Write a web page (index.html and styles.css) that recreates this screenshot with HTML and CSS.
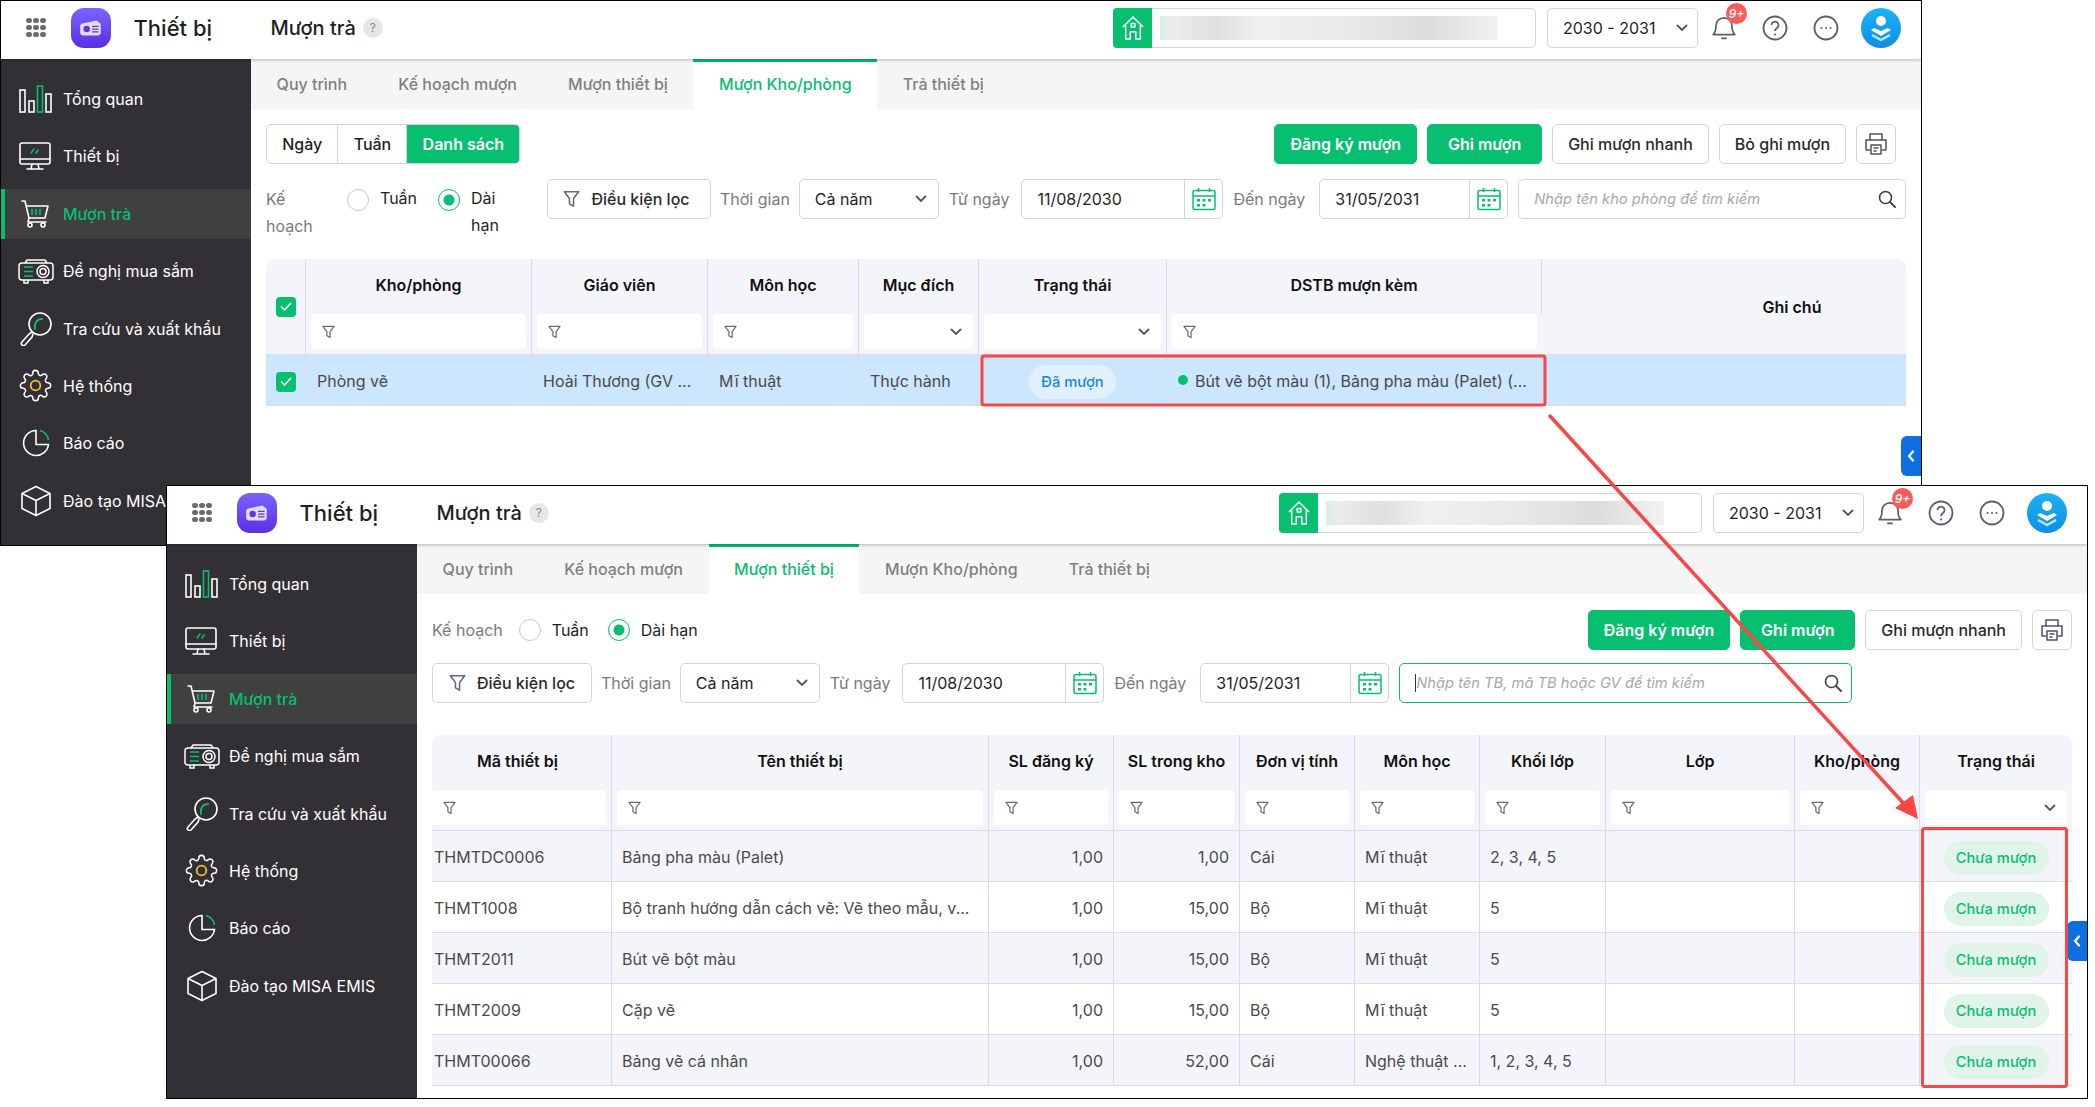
FILE: index.html
```html
<!DOCTYPE html>
<html lang="en">

<head>
    <meta charset="UTF-8">
    <meta name="viewport" content="width=device-width, initial-scale=1.0">
    <title>Mượn trà</title>
    <link rel="stylesheet" href="styles.css">
</head>

<body>
    <!-- Shared icons -->
    <svg class="sprite" xmlns="http://www.w3.org/2000/svg">
        <symbol id="i-bars" viewBox="0 0 33 28">
            <g fill="none" stroke="#fff" stroke-width="1.6"><rect x="1" y="5" width="5" height="22"/><rect x="10" y="16" width="5" height="11"/><rect x="27" y="9" width="5" height="18"/></g>
            <rect x="18.5" y="1" width="5" height="26" fill="none" stroke="#06bf6f" stroke-width="1.6"/>
        </symbol>
        <symbol id="i-monitor" viewBox="0 0 32 28">
            <g fill="none" stroke="#fff" stroke-width="1.6" stroke-linecap="round"><rect x="1" y="1" width="30" height="21" rx="2"/><path d="M1 17h30M13 22l-1 5M19 22l1 5M8 27h16"/></g>
            <path d="M12 11l3-4M17 11l2-3" stroke="#06bf6f" stroke-width="1.6" stroke-linecap="round"/>
        </symbol>
        <symbol id="i-cart" viewBox="0 0 28 28">
            <g fill="none" stroke="#fff" stroke-width="1.6" stroke-linecap="round" stroke-linejoin="round"><path d="M1 1h3l4 17h16M5 6h22l-3 12M8 18l-1 4h18"/><circle cx="9" cy="25" r="2"/><circle cx="22" cy="25" r="2"/></g>
            <path d="M11 9v6M15 9v6M19 9v6" stroke="#06bf6f" stroke-width="1.6"/>
        </symbol>
        <symbol id="i-projector" viewBox="0 0 36 26">
            <g fill="none" stroke="#fff" stroke-width="1.5"><rect x="1" y="5" width="34" height="17" rx="3"/><path d="M7 5l2-3h18l2 3M6 22v3h4v-3M26 22v3h4v-3"/><circle cx="25" cy="13.500" r="6"/><circle cx="25" cy="13.500" r="3"/></g>
            <path d="M6 9h9M6 13.500h9M6 18h9" stroke="#06bf6f" stroke-width="1.6"/>
        </symbol>
        <symbol id="i-search" viewBox="0 0 32 34">
            <g fill="none" stroke="#fff" stroke-width="1.6" stroke-linecap="round"><circle cx="20" cy="12" r="11"/><path d="M12 20l-3 2-7 8a2 2 0 0 0 3 3l7-8 1-3"/></g>
            <path d="M15 17c-1-6 2-10 7-10" fill="none" stroke="#06bf6f" stroke-width="1.8" stroke-linecap="round"/>
        </symbol>
        <symbol id="i-gear" viewBox="0 0 24 24">
            <path d="M19.400 15a1.650 1.650 0 0 0 .33 1.820l.06.06a2 2 0 0 1 0 2.830 2 2 0 0 1-2.830 0l-.06-.06a1.650 1.650 0 0 0-1.820-.33 1.650 1.650 0 0 0-1 1.510V21a2 2 0 0 1-2 2 2 2 0 0 1-2-2v-.09A1.650 1.650 0 0 0 9 19.400a1.650 1.650 0 0 0-1.820.33l-.06.06a2 2 0 0 1-2.830 0 2 2 0 0 1 0-2.830l.06-.06a1.650 1.650 0 0 0 .33-1.820 1.650 1.650 0 0 0-1.510-1H3a2 2 0 0 1-2-2 2 2 0 0 1 2-2h.09A1.650 1.650 0 0 0 4.600 9a1.650 1.650 0 0 0-.33-1.820l-.06-.06a2 2 0 0 1 0-2.830 2 2 0 0 1 2.830 0l.06.06a1.650 1.650 0 0 0 1.820.33H9a1.650 1.650 0 0 0 1-1.510V3a2 2 0 0 1 2-2 2 2 0 0 1 2 2v.09a1.650 1.650 0 0 0 1 1.510 1.650 1.650 0 0 0 1.820-.33l.06-.06a2 2 0 0 1 2.830 0 2 2 0 0 1 0 2.830l-.06.06a1.650 1.650 0 0 0-.33 1.820V9a1.650 1.650 0 0 0 1.510 1H21a2 2 0 0 1 2 2 2 2 0 0 1-2 2h-.09a1.650 1.650 0 0 0-1.510 1z" fill="none" stroke="#fff" stroke-width="1.100"/>
            <circle cx="12" cy="12" r="3.500" fill="none" stroke="#f2c230" stroke-width="1.300"/>
        </symbol>
        <symbol id="i-pie" viewBox="0 0 28 28">
            <path d="M14 1.500a12.500 12.500 0 1 0 12.500 14H14z" fill="none" stroke="#fff" stroke-width="1.600"/>
            <path d="M18 1.600a12 12 0 0 1 8.500 9.400" fill="none" stroke="#06bf6f" stroke-width="1.600"/>
        </symbol>
        <symbol id="i-cube" viewBox="0 0 32 32">
            <path d="M16 1.500L30 8.500v15L16 30.500 2 23.500v-15zM2 8.500l14 7 14-7M16 15.500v15" fill="none" stroke="#fff" stroke-width="1.600" stroke-linejoin="round"/>
        </symbol>
        <symbol id="i-funnel" viewBox="0 0 14 15">
            <path d="M1 1.500h12L8.700 7v6.500L5.300 11.500V7z" fill="none" stroke="#666a75" stroke-width="1.300" stroke-linejoin="round"/>
        </symbol>
        <symbol id="i-chevron" viewBox="0 0 12 8">
            <path d="M1.500 1.500L6 6l4.500-4.500" fill="none" stroke="#4f5260" stroke-width="1.800" stroke-linecap="round"/>
        </symbol>
        <symbol id="i-calendar" viewBox="0 0 24 24">
            <g fill="none" stroke="#06bf6f" stroke-width="1.500"><rect x="1" y="3.500" width="22" height="19" rx="2"/><path d="M1 9h22M6.500 1v4M17.500 1v4"/></g>
            <path d="M5 12h3v2.500H5zM10.500 12h3v2.500h-3zM16 12h3v2.500h-3zM5 17h3v2.500H5zM10.500 17h3v2.500h-3z" fill="#06bf6f"/>
        </symbol>
        <symbol id="i-lens" viewBox="0 0 18 18">
            <circle cx="7.500" cy="7.500" r="6" fill="none" stroke="#3c3f4a" stroke-width="1.600"/>
            <path d="M12 12l5 5" stroke="#3c3f4a" stroke-width="1.800" stroke-linecap="round"/>
        </symbol>
        <symbol id="i-printer" viewBox="0 0 24 24">
            <g fill="none" stroke="#4f5260" stroke-width="1.500" stroke-linejoin="round"><path d="M6 8V2h12v6M6 18H2V8h20v10h-4"/><rect x="7" y="13" width="10" height="9"/><path d="M9.500 16h5M9.500 19h3"/></g>
        </symbol>
        <symbol id="i-home" viewBox="0 0 24 28">
            <path d="M1 13L12 2l11 11M4 11v15h5v-8h6v8h5V11M10 9h4v4h-4z" fill="none" stroke="#fff" stroke-width="1.600" stroke-linejoin="round"/>
        </symbol>
        <symbol id="i-bell" viewBox="0 0 24 26">
            <path d="M2 20c2-2 2.500-4 2.500-8a7.500 7.500 0 0 1 15 0c0 4 .5 6 2.500 8zM10 23.500h4" fill="none" stroke="#5c5f6a" stroke-width="1.600" stroke-linecap="round" stroke-linejoin="round"/>
        </symbol>
        <symbol id="i-help" viewBox="0 0 26 26">
            <circle cx="13" cy="13" r="11.500" fill="none" stroke="#5c5f6a" stroke-width="1.800"/>
            <path d="M9.500 10a3.500 3.500 0 1 1 5.500 3c-1.300.9-2 1.500-2 3" fill="none" stroke="#5c5f6a" stroke-width="1.800"/>
            <circle cx="13" cy="19.500" r="1.100" fill="#5c5f6a"/>
        </symbol>
        <symbol id="i-more" viewBox="0 0 26 26">
            <circle cx="13" cy="13" r="11.500" fill="none" stroke="#5c5f6a" stroke-width="1.800"/>
            <path d="M8.500 13h.01M13 13h.01M17.500 13h.01" stroke="#5c5f6a" stroke-width="2" stroke-linecap="round"/>
        </symbol>
        <symbol id="i-user" viewBox="0 0 40 40">
            <circle cx="20" cy="13" r="5" fill="#fff"/>
            <path d="M10 22l10 6 10-6-3-2-7 3-7-3z" fill="#fff"/>
            <path d="M11 27l9 5 9-5" fill="none" stroke="#b8e6fd" stroke-width="2.500" stroke-linejoin="round"/>
        </symbol>
        <symbol id="i-beam" viewBox="0 0 24 16">
            <path d="M3 4l14-3 4 3v8c0 2-1 3-3 3H5c-2 0-3-1-3-3V6z" fill="#e3dcff"/>
            <circle cx="8" cy="9" r="3" fill="#5a35e0"/>
            <path d="M13 6.500h6M13 9h6M13 11.500h6" stroke="#5a35e0" stroke-width="1.200"/>
        </symbol>
        <symbol id="i-check" viewBox="0 0 12 10">
            <path d="M1.500 5l3 3 6-6.500" fill="none" stroke="#fff" stroke-width="1.700" stroke-linecap="round" stroke-linejoin="round"/>
        </symbol>
    </svg>

    <!-- Back window: Muon Kho/phong -->
    <div class="win win-a">
        <header class="head">
            <div class="apps"><i></i><i></i><i></i><i></i><i></i><i></i><i></i><i></i><i></i></div>
            <div class="logo"><svg><use href="#i-beam"/></svg></div>
            <div class="app-name">Thiết bị</div>
            <div class="page-name">Mượn trà</div>
            <div class="hint">?</div>
            <div class="school"><span class="school-home"><svg><use href="#i-home"/></svg></span><span class="school-blur"></span></div>
            <div class="year">2030 - 2031<svg class="chev"><use href="#i-chevron"/></svg></div>
            <div class="bell"><svg><use href="#i-bell"/></svg><span class="bell-count">9+</span></div>
            <svg class="head-icon"><use href="#i-help"/></svg>
            <svg class="head-icon"><use href="#i-more"/></svg>
            <div class="avatar"><svg><use href="#i-user"/></svg></div>
        </header>
        <div class="body">
            <nav class="side">
                <a class="nav-item"><svg class="nav-bars"><use href="#i-bars"/></svg>Tổng quan</a>
                <a class="nav-item"><svg class="nav-monitor"><use href="#i-monitor"/></svg>Thiết bị</a>
                <a class="nav-item active"><svg class="nav-cart"><use href="#i-cart"/></svg>Mượn trà</a>
                <a class="nav-item"><svg class="nav-projector"><use href="#i-projector"/></svg>Đề nghị mua sắm</a>
                <a class="nav-item"><svg class="nav-search"><use href="#i-search"/></svg>Tra cứu và xuất khẩu</a>
                <a class="nav-item"><svg class="nav-gear"><use href="#i-gear"/></svg>Hệ thống</a>
                <a class="nav-item"><svg class="nav-pie"><use href="#i-pie"/></svg>Báo cáo</a>
                <a class="nav-item"><svg class="nav-cube"><use href="#i-cube"/></svg>Đào tạo MISA EMIS</a>
            </nav>
            <main class="main">
                <div class="tabs">
                    <div class="tab">Quy trình</div>
                    <div class="tab">Kế hoạch mượn</div>
                    <div class="tab">Mượn thiết bị</div>
                    <div class="tab active">Mượn Kho/phòng</div>
                    <div class="tab">Trả thiết bị</div>
                </div>
                <div class="content">
                    <div class="bar">
                        <div class="views">
                            <div class="view">Ngày</div>
                            <div class="view">Tuần</div>
                            <div class="view active">Danh sách</div>
                        </div>
                        <div class="actions">
                            <button class="btn green">Đăng ký mượn</button>
                            <button class="btn green">Ghi mượn</button>
                            <button class="btn">Ghi mượn nhanh</button>
                            <button class="btn">Bỏ ghi mượn</button>
                            <button class="btn print"><svg><use href="#i-printer"/></svg></button>
                        </div>
                    </div>
                    <div class="filters narrow">
                        <div class="plan">
                            <div class="plan-label">Kế hoạch</div>
                            <div class="radio"><span class="dot"></span>Tuần</div>
                            <div class="radio on"><span class="dot"></span><span class="radio-text">Dài hạn</span></div>
                        </div>
                        <button class="btn filter"><svg><use href="#i-funnel"/></svg>Điều kiện lọc</button>
                        <span class="label">Thời gian</span>
                        <div class="select">Cả năm<svg class="chev"><use href="#i-chevron"/></svg></div>
                        <span class="label">Từ ngày</span>
                        <div class="date"><span>11/08/2030</span><i><svg><use href="#i-calendar"/></svg></i></div>
                        <span class="label">Đến ngày</span>
                        <div class="date date-end"><span>31/05/2031</span><i><svg><use href="#i-calendar"/></svg></i></div>
                        <div class="search"><span>Nhập tên kho phòng để tìm kiếm</span><svg><use href="#i-lens"/></svg></div>
                    </div>
                    <table class="grid grid-a">
                        <colgroup>
                            <col class="c40"><col class="c226"><col class="c176"><col class="c151"><col class="c120"><col class="c188"><col class="c375"><col>
                        </colgroup>
                        <thead>
                            <tr>
                                <th rowspan="2"><span class="check"><svg><use href="#i-check"/></svg></span></th>
                                <th>Kho/phòng</th>
                                <th>Giáo viên</th>
                                <th>Môn học</th>
                                <th>Mục đích</th>
                                <th>Trạng thái</th>
                                <th>DSTB mượn kèm</th>
                                <th rowspan="2" class="note">Ghi chú</th>
                            </tr>
                            <tr class="filter-row">
                                <td><div class="cell-input"><svg><use href="#i-funnel"/></svg></div></td>
                                <td><div class="cell-input"><svg><use href="#i-funnel"/></svg></div></td>
                                <td><div class="cell-input"><svg><use href="#i-funnel"/></svg></div></td>
                                <td><div class="cell-input pick"><svg><use href="#i-chevron"/></svg></div></td>
                                <td><div class="cell-input pick"><svg><use href="#i-chevron"/></svg></div></td>
                                <td><div class="cell-input"><svg><use href="#i-funnel"/></svg></div></td>
                            </tr>
                        </thead>
                        <tbody>
                            <tr class="picked">
                                <td class="center"><span class="check"><svg><use href="#i-check"/></svg></span></td>
                                <td>Phòng vẽ</td>
                                <td>Hoài Thương (GV ...</td>
                                <td>Mĩ thuật</td>
                                <td>Thực hành</td>
                                <td class="center"><span class="pill blue">Đã mượn</span></td>
                                <td><span class="bullet"></span>Bút vẽ bột màu (1), Bảng pha màu (Palet) (...</td>
                                <td></td>
                            </tr>
                        </tbody>
                    </table>
                </div>
            </main>
        </div>
        <div class="collapse"><svg viewBox="0 0 8 12"><path d="M6 1.500L2 6l4 4.500" fill="none" stroke="#fff" stroke-width="2.200" stroke-linecap="round"/></svg></div>
    </div>

    <!-- Front window: Muon thiet bi -->
    <div class="win win-b">
        <header class="head">
            <div class="apps"><i></i><i></i><i></i><i></i><i></i><i></i><i></i><i></i><i></i></div>
            <div class="logo"><svg><use href="#i-beam"/></svg></div>
            <div class="app-name">Thiết bị</div>
            <div class="page-name">Mượn trà</div>
            <div class="hint">?</div>
            <div class="school"><span class="school-home"><svg><use href="#i-home"/></svg></span><span class="school-blur"></span></div>
            <div class="year">2030 - 2031<svg class="chev"><use href="#i-chevron"/></svg></div>
            <div class="bell"><svg><use href="#i-bell"/></svg><span class="bell-count">9+</span></div>
            <svg class="head-icon"><use href="#i-help"/></svg>
            <svg class="head-icon"><use href="#i-more"/></svg>
            <div class="avatar"><svg><use href="#i-user"/></svg></div>
        </header>
        <div class="body">
            <nav class="side">
                <a class="nav-item"><svg class="nav-bars"><use href="#i-bars"/></svg>Tổng quan</a>
                <a class="nav-item"><svg class="nav-monitor"><use href="#i-monitor"/></svg>Thiết bị</a>
                <a class="nav-item active"><svg class="nav-cart"><use href="#i-cart"/></svg>Mượn trà</a>
                <a class="nav-item"><svg class="nav-projector"><use href="#i-projector"/></svg>Đề nghị mua sắm</a>
                <a class="nav-item"><svg class="nav-search"><use href="#i-search"/></svg>Tra cứu và xuất khẩu</a>
                <a class="nav-item"><svg class="nav-gear"><use href="#i-gear"/></svg>Hệ thống</a>
                <a class="nav-item"><svg class="nav-pie"><use href="#i-pie"/></svg>Báo cáo</a>
                <a class="nav-item"><svg class="nav-cube"><use href="#i-cube"/></svg>Đào tạo MISA EMIS</a>
            </nav>
            <main class="main">
                <div class="tabs">
                    <div class="tab">Quy trình</div>
                    <div class="tab">Kế hoạch mượn</div>
                    <div class="tab active">Mượn thiết bị</div>
                    <div class="tab">Mượn Kho/phòng</div>
                    <div class="tab">Trả thiết bị</div>
                </div>
                <div class="content">
                    <div class="bar">
                        <div class="plan">
                            <div class="plan-label">Kế hoạch</div>
                            <div class="radio"><span class="dot"></span>Tuần</div>
                            <div class="radio on"><span class="dot"></span><span class="radio-text">Dài hạn</span></div>
                        </div>
                        <div class="actions">
                            <button class="btn green">Đăng ký mượn</button>
                            <button class="btn green">Ghi mượn</button>
                            <button class="btn">Ghi mượn nhanh</button>
                            <button class="btn print"><svg><use href="#i-printer"/></svg></button>
                        </div>
                    </div>
                    <div class="filters">
                        <button class="btn filter"><svg><use href="#i-funnel"/></svg>Điều kiện lọc</button>
                        <span class="label">Thời gian</span>
                        <div class="select">Cả năm<svg class="chev"><use href="#i-chevron"/></svg></div>
                        <span class="label">Từ ngày</span>
                        <div class="date"><span>11/08/2030</span><i><svg><use href="#i-calendar"/></svg></i></div>
                        <span class="label">Đến ngày</span>
                        <div class="date date-end"><span>31/05/2031</span><i><svg><use href="#i-calendar"/></svg></i></div>
                        <div class="search focus"><b class="caret"></b><span>Nhập tên TB, mã TB hoặc GV để tìm kiếm</span><svg><use href="#i-lens"/></svg></div>
                    </div>
                    <table class="grid grid-b">
                        <colgroup>
                            <col class="c180"><col class="c377"><col class="c125"><col class="c126"><col class="c115"><col class="c125"><col class="c126"><col class="c189"><col class="c125"><col>
                        </colgroup>
                        <thead>
                            <tr>
                                <th class="first">Mã thiết bị</th>
                                <th>Tên thiết bị</th>
                                <th>SL đăng ký</th>
                                <th>SL trong kho</th>
                                <th>Đơn vị tính</th>
                                <th>Môn học</th>
                                <th>Khối lớp</th>
                                <th>Lớp</th>
                                <th>Kho/phòng</th>
                                <th>Trạng thái</th>
                            </tr>
                            <tr class="filter-row">
                                <td class="flush"><div class="cell-input"><svg><use href="#i-funnel"/></svg></div></td>
                                <td><div class="cell-input"><svg><use href="#i-funnel"/></svg></div></td>
                                <td><div class="cell-input"><svg><use href="#i-funnel"/></svg></div></td>
                                <td><div class="cell-input"><svg><use href="#i-funnel"/></svg></div></td>
                                <td><div class="cell-input"><svg><use href="#i-funnel"/></svg></div></td>
                                <td><div class="cell-input"><svg><use href="#i-funnel"/></svg></div></td>
                                <td><div class="cell-input"><svg><use href="#i-funnel"/></svg></div></td>
                                <td><div class="cell-input"><svg><use href="#i-funnel"/></svg></div></td>
                                <td><div class="cell-input"><svg><use href="#i-funnel"/></svg></div></td>
                                <td><div class="cell-input pick"><svg><use href="#i-chevron"/></svg></div></td>
                            </tr>
                        </thead>
                        <tbody>
                            <tr>
                                <td class="code">THMTDC0006</td><td>Bảng pha màu (Palet)</td><td class="num">1,00</td><td class="num">1,00</td><td>Cái</td><td>Mĩ thuật</td><td>2, 3, 4, 5</td><td></td><td></td><td class="center"><span class="pill mint">Chưa mượn</span></td>
                            </tr>
                            <tr>
                                <td class="code">THMT1008</td><td>Bộ tranh hướng dẫn cách vẽ: Vẽ theo mẫu, v...</td><td class="num">1,00</td><td class="num">15,00</td><td>Bộ</td><td>Mĩ thuật</td><td>5</td><td></td><td></td><td class="center"><span class="pill mint">Chưa mượn</span></td>
                            </tr>
                            <tr>
                                <td class="code">THMT2011</td><td>Bút vẽ bột màu</td><td class="num">1,00</td><td class="num">15,00</td><td>Bộ</td><td>Mĩ thuật</td><td>5</td><td></td><td></td><td class="center"><span class="pill mint">Chưa mượn</span></td>
                            </tr>
                            <tr>
                                <td class="code">THMT2009</td><td>Cặp vẽ</td><td class="num">1,00</td><td class="num">15,00</td><td>Bộ</td><td>Mĩ thuật</td><td>5</td><td></td><td></td><td class="center"><span class="pill mint">Chưa mượn</span></td>
                            </tr>
                            <tr>
                                <td class="code">THMT00066</td><td>Bảng vẽ cá nhân</td><td class="num">1,00</td><td class="num">52,00</td><td>Cái</td><td>Nghệ thuật ...</td><td>1, 2, 3, 4, 5</td><td></td><td></td><td class="center"><span class="pill mint">Chưa mượn</span></td>
                            </tr>
                        </tbody>
                    </table>
                </div>
            </main>
        </div>
        <div class="collapse"><svg viewBox="0 0 8 12"><path d="M6 1.500L2 6l4 4.500" fill="none" stroke="#fff" stroke-width="2.200" stroke-linecap="round"/></svg></div>
    </div>

    <!-- Red callouts drawn over both windows -->
    <svg class="callouts" viewBox="0 0 2095 1107" xmlns="http://www.w3.org/2000/svg">
        <g fill="none" stroke="#fb4646" stroke-width="3">
            <rect x="982" y="356" width="563" height="49" rx="2"/>
            <rect x="1922.500" y="828.500" width="144" height="258" rx="2"/>
        </g>
        <path d="M1550 416L1906 806" stroke="#fb4646" stroke-width="3.500" stroke-linecap="round"/>
        <path d="M1918 819L1895 808L1913 795z" fill="#fb4646"/>
    </svg>
</body>

</html>
```

FILE: styles.css
```css
/* Page is a free canvas with two overlapping app windows */

* {
    box-sizing: border-box;
}

body {
    position: relative;
    width: 2095px;
    height: 1107px;
    margin: 0;
    overflow: hidden;
    background: #fff;
    font-family: 'Inter', 'Noto Sans', sans-serif;
    font-size: 16px;
    color: #1f1f1f;
}

.sprite {
    display: none;
}

.win {
    position: absolute;
    isolation: isolate;
    display: flex;
    flex-direction: column;
    overflow: hidden;
    background: #fff;
    border: 1.5px solid #000;
}

.win-a {
    left: 0;
    top: 0;
    width: 1922px;
    height: 546px;
}

.win-b {
    left: 166px;
    top: 485px;
    width: 1922px;
    height: 614px;
}

/* Top header */

.head {
    display: flex;
    align-items: center;
    flex: 0 0 58px;
    padding: 0 20px 5px 0;
    box-shadow: 0 1px 3px rgba(0, 0, 0, 0.25);
    position: relative;
    z-index: 1;
}

.apps {
    display: grid;
    grid-template-columns: repeat(3, 5.500px);
    gap: 1.500px;
    margin-left: 25px;
}

.apps i {
    width: 5.500px;
    height: 5.500px;
    border-radius: 50%;
    background: #6b6b6b;
}

.logo {
    display: flex;
    align-items: center;
    justify-content: center;
    width: 40px;
    height: 40px;
    margin-left: 25px;
    border-radius: 13px;
    background: linear-gradient(180deg, #7b63ff, #5a2fe6);
}

.logo svg {
    width: 26px;
    height: 18px;
}

.app-name {
    margin-left: 23px;
    width: 137px;
    font-size: 22px;
    font-weight: 500;
}

.page-name {
    font-size: 20px;
    font-weight: 500;
}

.hint {
    width: 20px;
    height: 20px;
    margin-left: 7px;
    border-radius: 50%;
    background: #e6e6e6;
    color: #888;
    font-size: 12px;
    line-height: 20px;
    text-align: center;
}

.school {
    display: flex;
    align-items: center;
    width: 423px;
    height: 40px;
    margin-left: auto;
    border: 1px solid #d5d5d5;
    border-left: 0;
    border-radius: 5px;
}

.school-home {
    display: flex;
    align-items: center;
    justify-content: center;
    width: 39px;
    height: 40px;
    background: #06bf6f;
    border-radius: 4px 0 0 4px;
}

.school-home svg {
    width: 22px;
    height: 26px;
}

.school-blur {
    width: 338px;
    height: 24px;
    margin-left: 8px;
    background: linear-gradient(90deg, #d8efe3 0, #ececec 4%, #dfdfdf 16%, #f0f0f0 30%, #e9e9e9 55%, #dcdcdc 80%, #f2f2f2 100%);
}

.year {
    display: flex;
    align-items: center;
    justify-content: space-between;
    width: 151px;
    height: 40px;
    margin-left: 11px;
    padding: 0 9px 0 15px;
    border: 1px solid #d5d5d5;
    border-radius: 5px;
}

.chev {
    width: 12px;
    height: 8px;
}

.bell {
    position: relative;
    width: 26px;
    height: 30px;
    margin-left: 13px;
}

.bell svg {
    width: 26px;
    height: 28px;
}

.bell-count {
    position: absolute;
    left: 15px;
    top: -10px;
    width: 21px;
    height: 21px;
    border-radius: 50%;
    background: #fb5a5a;
    color: #fff;
    font-size: 12px;
    font-style: italic;
    font-weight: 500;
    line-height: 21px;
    text-align: center;
}

.head-icon {
    width: 26px;
    height: 26px;
    margin-left: 25px;
}

.avatar {
    display: flex;
    width: 40px;
    height: 40px;
    margin-left: 22px;
    border-radius: 50%;
    background: linear-gradient(180deg, #1cb2f5, #0e8fe2);
}

.avatar svg {
    width: 40px;
    height: 40px;
}

/* Sidebar */

.body {
    display: flex;
    flex: 1;
    min-height: 0;
}

.side {
    display: flex;
    flex-direction: column;
    gap: 7.400px;
    flex: 0 0 250px;
    padding-top: 15px;
    background: #323034;
}

.nav-item {
    display: flex;
    align-items: center;
    flex: 0 0 50px;
    padding-left: 62px;
    position: relative;
    color: #fff;
    white-space: nowrap;
}

.nav-item svg {
    position: absolute;
}

.nav-item.active {
    background: #404040;
    border-left: 4px solid #06bf6f;
    padding-left: 58px;
    color: #06bf6f;
    font-weight: 500;
}

.nav-bars {
    left: 18px;
    width: 33px;
    height: 28px;
}

.nav-monitor {
    left: 18px;
    width: 32px;
    height: 28px;
}

.nav-cart {
    left: 16px;
    width: 28px;
    height: 28px;
}

.nav-projector {
    left: 17px;
    width: 36px;
    height: 26px;
}

.nav-search {
    left: 19px;
    width: 32px;
    height: 34px;
}

.nav-gear {
    left: 18px;
    width: 33px;
    height: 33px;
}

.nav-pie {
    left: 21px;
    width: 28px;
    height: 28px;
}

.nav-cube {
    left: 19px;
    width: 32px;
    height: 32px;
}

/* Tabs */

.main {
    flex: 1;
    min-width: 0;
}

.tabs {
    display: flex;
    height: 50px;
    background: #f5f5f5;
}

.tab {
    display: flex;
    align-items: center;
    padding: 0 25.600px;
    color: #808080;
    font-weight: 500;
}

.tab.active {
    padding-bottom: 3px;
    background: #fff;
    border-top: 3px solid #06bf6f;
    color: #06bf6f;
}

/* Toolbar */

.content {
    padding: 15px 15px 0;
}

.bar {
    display: flex;
    align-items: center;
    justify-content: space-between;
    height: 40px;
}

.views {
    display: flex;
    height: 40px;
    border: 1px solid #d5d5d5;
    border-radius: 5px;
    font-weight: 500;
}

.view {
    display: flex;
    align-items: center;
    padding: 0 15.200px;
    border-right: 1px solid #d5d5d5;
}

.view.active {
    background: #06bf6f;
    border: 0;
    border-radius: 0 4px 4px 0;
    color: #fff;
    font-weight: 600;
}

.actions {
    display: flex;
    gap: 10px;
}

.win-a .actions {
    margin-right: 10px;
}

.btn {
    display: flex;
    align-items: center;
    justify-content: center;
    height: 40px;
    padding: 0 15px;
    background: #fff;
    border: 1px solid #d5d5d5;
    border-radius: 5px;
    font-family: inherit;
    font-size: 16px;
    font-weight: 500;
    color: #2a2a2a;
}

.btn.green {
    background: #06bf6f;
    border-color: #06bf6f;
    color: #fff;
    font-weight: 600;
}

.btn.green + .btn.green {
    min-width: 115px;
}

.btn.print {
    width: 40px;
    padding: 0;
}

.btn.print svg {
    width: 24px;
    height: 24px;
}

.btn.filter {
    flex: 0 0 160px;
    gap: 11px;
    padding: 0;
}

.btn.filter svg {
    width: 17px;
    height: 18px;
}

.plan {
    display: flex;
    align-items: center;
    gap: 16px;
}

.bar .radio.on {
    margin-left: 3px;
}

.plan-label,
.label {
    color: #7a7a7a;
    white-space: nowrap;
}

.radio {
    display: flex;
    align-items: center;
    gap: 11px;
}

.dot {
    flex: 0 0 22px;
    height: 22px;
    border: 1.500px solid #c9c9c9;
    border-radius: 50%;
}

.radio.on .dot {
    border-color: #06bf6f;
    background: radial-gradient(circle, #06bf6f 0 5px, #fff 6px);
}

.filters {
    display: flex;
    align-items: center;
    gap: 9px;
    height: 40px;
    margin-top: 13px;
}

.filters.narrow {
    margin-top: 15px;
}

.narrow .plan {
    flex: 0 0 272px;
    align-self: flex-start;
    align-items: flex-start;
    gap: 0;
    margin-top: 7px;
    line-height: 27px;
}

.narrow .plan-label {
    flex: 0 0 81px;
    white-space: normal;
    padding-right: 20px;
}

.narrow .radio {
    align-items: flex-start;
    flex: 0 0 91px;
    margin-top: -1px;
}

.narrow .radio-text {
    width: 40px;
}

.narrow .dot {
    margin-top: 4px;
}

.win-a .btn.filter {
    flex-basis: 164px;
    padding-right: 5px;
}

.select {
    display: flex;
    align-items: center;
    justify-content: space-between;
    flex: 0 0 140px;
    height: 40px;
    margin-right: 1px;
    padding: 0 11px 0 15px;
    border: 1px solid #d5d5d5;
    border-radius: 5px;
}

.date {
    display: flex;
    flex: 0 0 202px;
    height: 40px;
    margin: 0 1px 0 3px;
    border: 1px solid #d5d5d5;
    border-radius: 5px;
}

.date-end {
    flex-basis: 189px;
    margin-left: 5px;
}

.date span {
    flex: 1;
    padding-left: 15px;
    line-height: 38px;
}

.date i {
    display: flex;
    align-items: center;
    justify-content: center;
    flex: 0 0 38px;
    border-left: 1px solid #d5d5d5;
}

.date svg {
    width: 24px;
    height: 24px;
}

.search {
    display: flex;
    align-items: center;
    flex: 1;
    height: 40px;
    padding: 0 9px 0 15px;
    border: 1px solid #d5d5d5;
    border-radius: 5px;
    color: #a8a8a8;
    font-size: 14.700px;
    font-style: italic;
}

.search span {
    flex: 1;
}

.search svg {
    width: 18px;
    height: 18px;
}

.search.focus {
    flex: 0 0 453px;
    padding-left: 15px;
    border-color: #06bf6f;
}

.caret {
    width: 1px;
    height: 18px;
    background: #333;
}

.win-b .bar {
    margin-top: 1px;
}

/* Data tables */

.grid {
    table-layout: fixed;
    width: 100%;
    margin-top: 40px;
    border-collapse: separate;
    border-spacing: 0;
    border-radius: 8px 8px 0 0;
    overflow: hidden;
}

.grid-b {
    margin-top: 32px;
}

.c40 { width: 40px; }
.c115 { width: 115px; }
.c120 { width: 120px; }
.c125 { width: 125px; }
.c126 { width: 126px; }
.c151 { width: 151px; }
.c176 { width: 176px; }
.c180 { width: 180px; }
.c188 { width: 188px; }
.c189 { width: 189px; }
.c226 { width: 226px; }
.c375 { width: 375px; }
.c377 { width: 377px; }

.grid th,
.grid td {
    padding: 0;
    border-right: 1px solid #d9dcea;
    white-space: nowrap;
    overflow: hidden;
}

.grid th:last-child,
.grid td:last-child {
    border-right: 0;
}

.grid th {
    height: 55px;
    padding-bottom: 4px;
    background: #f4f5fa;
    font-weight: 600;
    text-align: center;
    color: #111;
}

.grid th[rowspan] {
    padding-bottom: 0;
    border-bottom: 1px solid #d9dcea;
}

.grid th.note {
    padding-left: 136px;
}

.grid th.first {
    padding-right: 8px;
}

.filter-row td {
    height: 40px;
    padding: 0 5px 5px;
    background: #f4f5fa;
    vertical-align: top;
    border-bottom: 1px solid #d9dcea;
}

.filter-row td.flush {
    padding-left: 0;
}

.cell-input {
    display: flex;
    align-items: center;
    height: 35px;
    padding-left: 11px;
    background: #fff;
    border-radius: 4px;
}

.cell-input svg {
    width: 13px;
    height: 14px;
}

.cell-input.pick {
    justify-content: flex-end;
    padding-right: 11px;
}

.cell-input.pick svg {
    width: 12px;
    height: 8px;
}

.grid tbody td {
    height: 51px;
    padding: 1px 10px 0;
    border-bottom: 1px solid #d9dcea;
    color: #4a4a4a;
}

.grid-a tbody td {
    padding-left: 11px;
}

.grid tbody td.code {
    padding-left: 2px;
}

.grid tbody td.num {
    text-align: right;
    padding-right: 10px;
}

.grid tbody td.center {
    padding: 3px 0 0;
    text-align: center;
}

.grid-b tbody tr:nth-child(odd) td {
    background: #f4f5fa;
}

.grid tr.picked td {
    background: #cbe6fd;
}

.check {
    display: inline-flex;
    align-items: center;
    justify-content: center;
    width: 20px;
    height: 20px;
    background: #06bf6f;
    border-radius: 4px;
    vertical-align: middle;
}

.check svg {
    width: 12px;
    height: 10px;
}

.pill {
    display: inline-block;
    height: 34px;
    border-radius: 17px;
    font-size: 14.700px;
    font-weight: 500;
    line-height: 34px;
    vertical-align: middle;
}

.pill.mint {
    width: 105px;
    background: #e1f4ea;
    color: #06bf6f;
}

.pill.blue {
    width: 87px;
    background: #e1f0fd;
    color: #1a86e8;
}

.bullet {
    display: inline-block;
    width: 10px;
    height: 10px;
    margin-right: 7px;
    border-radius: 50%;
    background: #06bf6f;
    vertical-align: 2px;
}

/* Small blue handle on the right edge */

.collapse {
    position: absolute;
    right: 0;
    top: 435px;
    display: flex;
    align-items: center;
    justify-content: center;
    width: 20px;
    height: 40px;
    background: #0d6fe0;
    border-radius: 6px 0 0 6px;
}

.collapse svg {
    width: 8px;
    height: 12px;
}

/* Annotation layer */

.callouts {
    position: absolute;
    left: 0;
    top: 0;
    width: 2095px;
    height: 1107px;
    pointer-events: none;
    z-index: 2;
}
```
